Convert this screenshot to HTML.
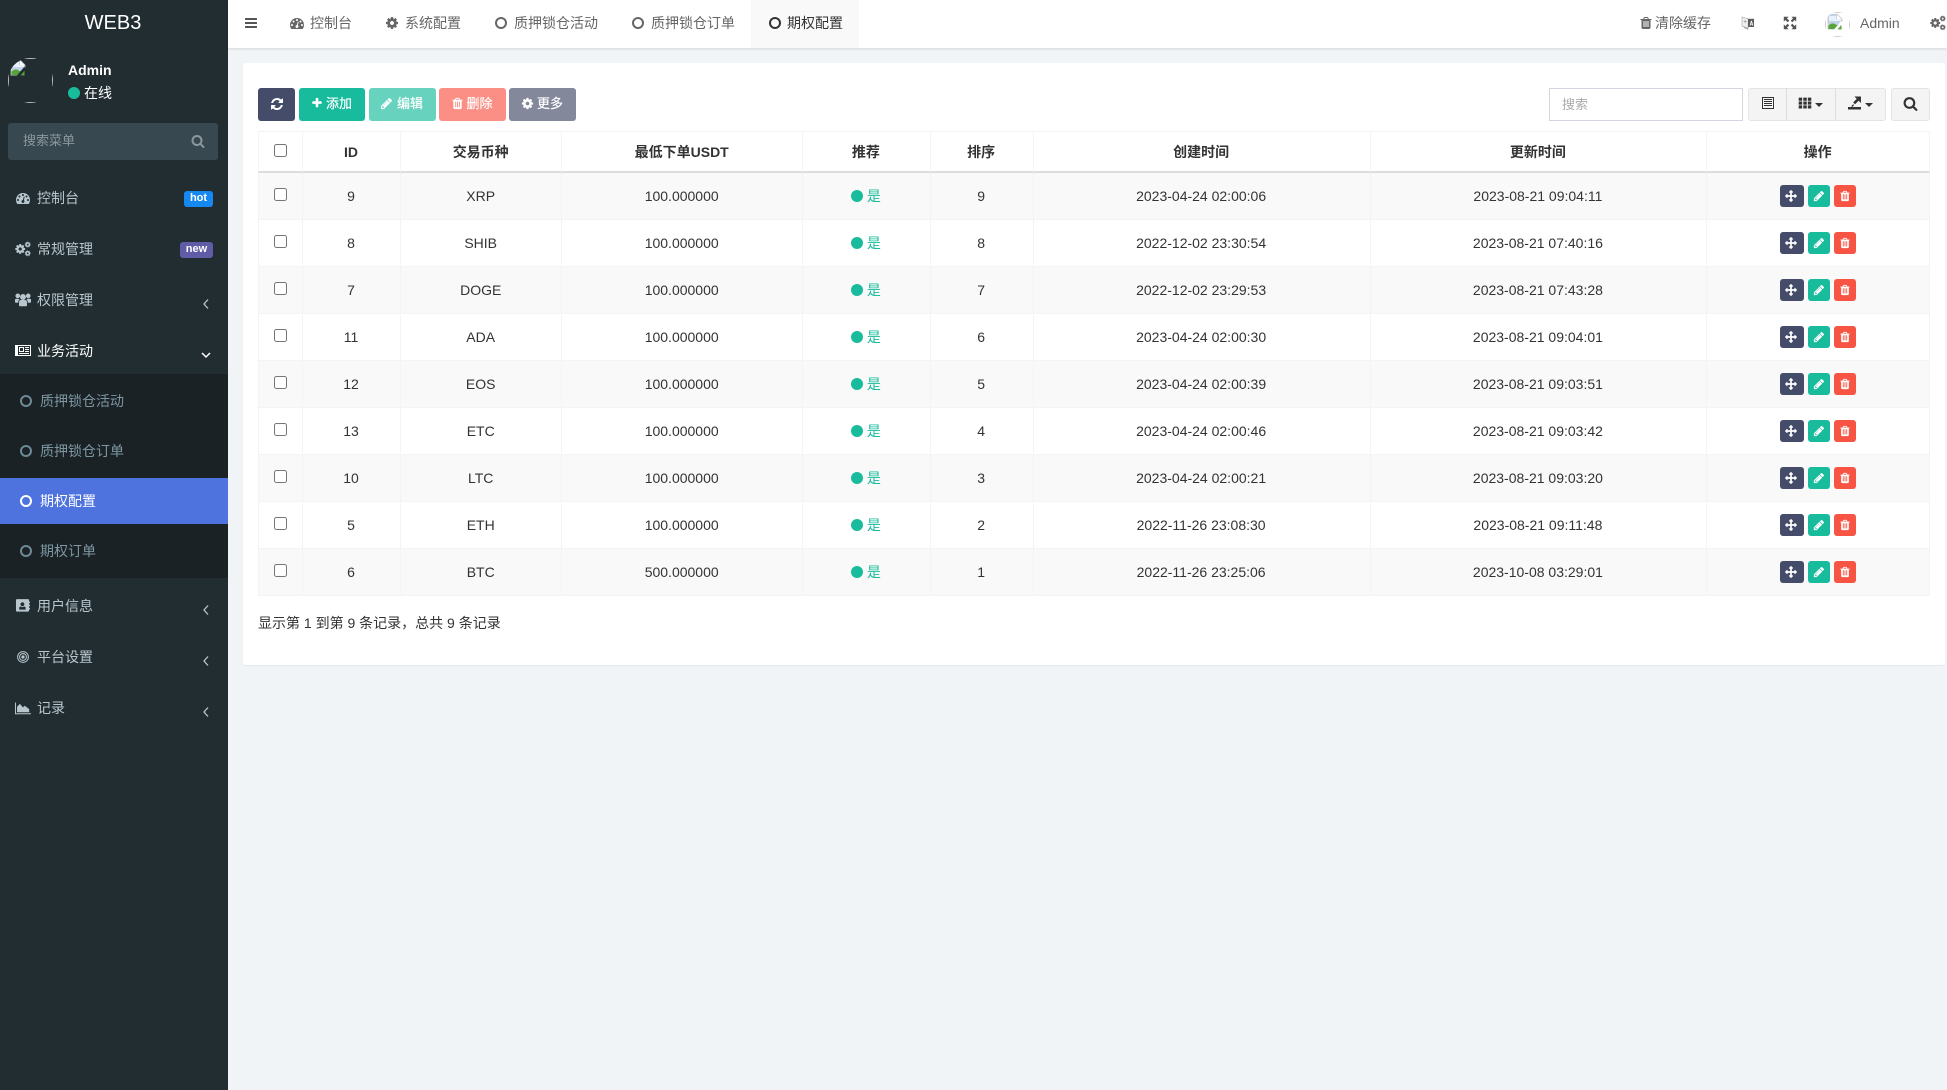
<!DOCTYPE html>
<html lang="zh"><head><meta charset="utf-8"><title>WEB3</title>
<style>
*{box-sizing:border-box}
html,body{margin:0;padding:0;width:1947px;height:1090px;overflow:hidden;background:#f1f4f6;font:14px/20px "Liberation Sans","Noto Sans CJK SC",sans-serif;color:#333}
.a{position:absolute;white-space:nowrap}
svg.i{position:absolute;fill:currentColor;display:block;overflow:visible}
#side{position:absolute;left:0;top:0;width:228px;height:1090px;background:#222d32}
#top{position:absolute;left:228px;top:0;width:1719px;height:48px;background:#fff;box-shadow:0 1px 3px rgba(0,0,0,.12)}
.m{position:absolute;left:37px;color:#b8c7ce;white-space:nowrap;line-height:20px}
.sm{position:absolute;left:40px;color:#7d96a1;white-space:nowrap;line-height:20px}
.ring{position:absolute;border:2.4px solid currentColor;border-radius:50%;width:12px;height:12px}
.tt{position:absolute;top:13px;color:#666;white-space:nowrap;line-height:20px}
#panel{position:absolute;left:243px;top:63px;width:1702px;height:602px;background:#fff;border-radius:3px;box-shadow:0 1px 1px rgba(0,0,0,.05)}
.btn{position:absolute;top:88px;height:33px;border-radius:3px;color:#fff;font-size:13px;line-height:31px;white-space:nowrap;-webkit-text-stroke:.2px #fff}
table{position:absolute;left:258px;top:131px;width:1672px;border-collapse:separate;border-spacing:0;table-layout:fixed}
th,td{text-align:center;padding:0 1px 0 0;border-left:1px solid #f4f4f4;vertical-align:middle;position:relative}
th:last-child,td:last-child{border-right:1px solid #f4f4f4}
th{height:42px;border-top:1px solid #f4f4f4;border-bottom:2px solid #ddd;font-weight:700;line-height:20px;padding-top:1px}
td{height:47px;border-bottom:1px solid #f4f4f4;line-height:20px}
tr.o td{background:#f9f9f9}
.cb{position:absolute;left:15px;top:15px;width:13px;height:13px;margin:0}
th .cb{top:12px}
.dot{display:inline-block;width:12px;height:12px;border-radius:50%;background:#18bc9c;vertical-align:-1px;margin-right:4px}
.y{color:#18bc9c}
.ab{position:absolute;top:12px;width:22px;height:22px;border-radius:3px;color:#fff}
.ab svg{left:5px;top:5px;width:12px;height:12px}
</style></head>
<body>
<svg width="0" height="0" style="position:absolute">
<defs>
<symbol id="bars" viewBox="0 0 1792 1792"><path d="M1664 1344v128q0 26-19 45t-45 19h-1408q-26 0-45-19t-19-45v-128q0-26 19-45t45-19h1408q26 0 45 19t19 45zm0-512v128q0 26-19 45t-45 19h-1408q-26 0-45-19t-19-45v-128q0-26 19-45t45-19h1408q26 0 45 19t19 45zm0-512v128q0 26-19 45t-45 19h-1408q-26 0-45-19t-19-45v-128q0-26 19-45t45-19h1408q26 0 45 19t19 45z"/></symbol>
<symbol id="search" viewBox="0 0 1792 1792"><path d="M1216 832q0-185-131.500-316.500t-316.500-131.500-316.500 131.500-131.500 316.500 131.500 316.500 316.500 131.500 316.500-131.500 131.500-316.500zm512 832q0 52-38 90t-90 38q-54 0-90-38l-343-342q-179 124-399 124-143 0-273.500-55.500t-225-150-150-225-55.500-273.500 55.500-273.500 150-225 225-150 273.500-55.500 273.500 55.500 225 150 150 225 55.500 273.500q0 220-124 399l343 343q37 37 37 90z"/></symbol>
<symbol id="plus" viewBox="0 0 1792 1792"><path d="M1600 736v192q0 40-28 68t-68 28h-416v416q0 40-28 68t-68 28h-192q-40 0-68-28t-28-68v-416h-416q-40 0-68-28t-28-68v-192q0-40 28-68t68-28h416v-416q0-40 28-68t68-28h192q40 0 68 28t28 68v416h416q40 0 68 28t28 68z"/></symbol>
<symbol id="pencil" viewBox="0 0 1792 1792"><path d="M491 1536l91-91-235-235-91 91v107h128v128h107zm523-928q0-22-22-22-10 0-17 7l-542 542q-7 7-7 17 0 22 22 22 10 0 17-7l542-542q7-7 7-17zm-54-192l416 416-832 832h-416v-416zm683 96q0 53-37 90l-166 166-416-416 166-165q36-38 90-38 53 0 91 38l235 234q37 39 37 91z"/></symbol>
<symbol id="trash" viewBox="0 0 1792 1792"><path d="M704 1376v-704q0-14-9-23t-23-9h-64q-14 0-23 9t-9 23v704q0 14 9 23t23 9h64q14 0 23-9t9-23zm256 0v-704q0-14-9-23t-23-9h-64q-14 0-23 9t-9 23v704q0 14 9 23t23 9h64q14 0 23-9t9-23zm256 0v-704q0-14-9-23t-23-9h-64q-14 0-23 9t-9 23v704q0 14 9 23t23 9h64q14 0 23-9t9-23zm-544-992h448l-48-117q-7-9-17-11h-317q-10 2-17 11zm928 32v64q0 14-9 23t-23 9h-96v948q0 83-47 143.500t-113 60.500h-832q-66 0-113-58.500t-47-141.500v-952h-96q-14 0-23-9t-9-23v-64q0-14 9-23t23-9h309l70-167q15-37 54-63t79-26h320q40 0 79 26t54 63l70 167h309q14 0 23 9t9 23z"/></symbol>
<symbol id="cog" viewBox="0 0 1792 1792"><path d="M1152 896q0-106-75-181t-181-75-181 75-75 181 75 181 181 75 181-75 75-181zm512-109v222q0 12-8 23t-20 13l-185 28q-19 54-39 91 35 50 107 138 10 12 10 25t-9 23q-27 37-99 108t-94 71q-12 0-26-9l-138-108q-44 23-91 38-16 136-29 186-7 28-36 28h-222q-14 0-24.500-8.500t-11.500-21.500l-28-184q-49-16-90-37l-141 107q-10 9-25 9-14 0-25-11-126-114-165-168-7-10-7-23 0-12 8-23 15-21 51-66.500t54-70.500q-27-50-41-99l-183-27q-13-2-21-12.500t-8-23.500v-222q0-12 8-23t19-13l186-28q14-46 39-92-40-57-107-138-10-12-10-24 0-10 9-23 26-36 98.500-107.500t94.500-71.500q13 0 26 10l138 107q44-23 91-38 16-136 29-186 7-28 36-28h222q14 0 24.500 8.500t11.500 21.500l28 184q49 16 90 37l142-107q9-9 24-9 13 0 25 10 129 119 165 170 7 8 7 22 0 12-8 23-15 21-51 66.500t-54 70.500q26 50 41 98l183 28q13 2 21 12.500t8 23.500z"/></symbol>
<symbol id="cogs" viewBox="0 0 1792 1792"><path transform="translate(-60 250) scale(.72)" d="M1152 896q0-106-75-181t-181-75-181 75-75 181 75 181 181 75 181-75 75-181zm512-109v222q0 12-8 23t-20 13l-185 28q-19 54-39 91 35 50 107 138 10 12 10 25t-9 23q-27 37-99 108t-94 71q-12 0-26-9l-138-108q-44 23-91 38-16 136-29 186-7 28-36 28h-222q-14 0-24.500-8.500t-11.500-21.500l-28-184q-49-16-90-37l-141 107q-10 9-25 9-14 0-25-11-126-114-165-168-7-10-7-23 0-12 8-23 15-21 51-66.500t54-70.500q-27-50-41-99l-183-27q-13-2-21-12.500t-8-23.500v-222q0-12 8-23t19-13l186-28q14-46 39-92-40-57-107-138-10-12-10-24 0-10 9-23 26-36 98.500-107.500t94.500-71.500q13 0 26 10l138 107q44-23 91-38 16-136 29-186 7-28 36-28h222q14 0 24.500 8.500t11.500 21.500l28 184q49 16 90 37l142-107q9-9 24-9 13 0 25 10 129 119 165 170 7 8 7 22 0 12-8 23-15 21-51 66.500t-54 70.500q26 50 41 98l183 28q13 2 21 12.500t8 23.500z"/><g fill="none" stroke="currentColor"><circle cx="1420" cy="400" r="190" stroke-width="170"/><circle cx="1420" cy="1380" r="190" stroke-width="170"/><circle cx="1420" cy="400" r="300" stroke-width="60" stroke-dasharray="90 100"/><circle cx="1420" cy="1380" r="300" stroke-width="60" stroke-dasharray="90 100"/></g></symbol>
<symbol id="arrows" viewBox="0 0 1792 1792"><path d="M1792 896q0 26-19 45l-256 256q-19 19-45 19t-45-19-19-45v-128h-384v384h128q26 0 45 19t19 45-19 45l-256 256q-19 19-45 19t-45-19l-256-256q-19-19-19-45t19-45 45-19h128v-384h-384v128q0 26-19 45t-45 19-45-19l-256-256q-19-19-19-45t19-45l256-256q19-19 45-19t45 19 19 45v128h384v-384h-128q-26 0-45-19t-19-45 19-45l256-256q19-19 45-19t45 19l256 256q19 19 19 45t-19 45-45 19h-128v384h384v-128q0-26 19-45t45-19 45 19l256 256q19 19 19 45z"/></symbol>
<symbol id="refresh" viewBox="0 0 1792 1792"><path d="M1639 1056q0 5-1 7-64 268-268 434.500t-478 166.500q-146 0-282.500-55t-243.500-157l-129 129q-19 19-45 19t-45-19-19-45v-448q0-26 19-45t45-19h448q26 0 45 19t19 45-19 45l-137 137q71 66 161 102t187 36q134 0 250-65t186-179q11-17 53-117 8-23 30-23h192q13 0 22.500 9.500t9.500 22.500zm25-800v448q0 26-19 45t-45 19h-448q-26 0-45-19t-19-45 19-45l138-138q-148-137-349-137-134 0-250 65t-186 179q-11 17-53 117-8 23-30 23h-199q-13 0-22.500-9.500t-9.500-22.500v-7q65-268 270-434.500t480-166.500q146 0 284 55.500t245 156.500l130-129q19-19 45-19t45 19 19 45z"/></symbol>
<symbol id="dash" viewBox="0 0 1792 1792"><path d="M384 1152q0-53-37.500-90.500t-90.500-37.500-90.500 37.500-37.500 90.500 37.500 90.500 90.500 37.500 90.500-37.500 37.500-90.500zm192-448q0-53-37.500-90.500t-90.500-37.500-90.500 37.500-37.500 90.500 37.500 90.500 90.500 37.500 90.500-37.500 37.500-90.500zm428 481l101-382q6-26-7.500-48.500t-38.500-29.500-48 6.500-30 39.500l-101 382q-60 5-107 43.500t-63 98.500q-20 77 20 146t117 89 146-20 89-117q16-60-6-117t-72-91zm660-33q0-53-37.500-90.500t-90.500-37.500-90.500 37.500-37.500 90.500 37.500 90.500 90.500 37.500 90.500-37.500 37.500-90.500zm-640-640q0-53-37.500-90.500t-90.500-37.500-90.500 37.500-37.500 90.500 37.500 90.500 90.500 37.500 90.500-37.500 37.500-90.500zm448 192q0-53-37.500-90.500t-90.500-37.500-90.500 37.500-37.500 90.500 37.500 90.500 90.500 37.500 90.500-37.500 37.500-90.500zm320 448q0 261-141 483-19 29-54 29h-1402q-35 0-54-29-141-221-141-483 0-182 71-348t191-286 286-191 348-71 348 71 286 191 191 286 71 348z"/></symbol>
<symbol id="users" viewBox="0 0 1792 1792"><circle cx="896" cy="560" r="330"/><circle cx="310" cy="430" r="260"/><circle cx="1482" cy="430" r="260"/><path d="M450 1530V1130q0-200 190-230h512q190 30 190 230v400q0 70-90 70H540q-90 0-90-70zM0 1100V860q0-90 130-100h250q50 70 130 110-150 60-150 280v60H120q-120 0-120-110zM1792 1100V860q0-90-130-100h-250q-50 70-130 110 150 60 150 280v60h240q120 0 120-110z"/></symbol>
<symbol id="addr" viewBox="0 0 1792 1792"><path fill-rule="evenodd" d="M220 130h1240q110 0 110 110v150h110v180h-110v170h110v180h-110v170h110v180h-110v150q0 110-110 110H220q-110 0-110-110V240q0-110 110-110zM830 480a220 220 0 1 0 .1 0zM470 1300h720v-160q0-170-170-190l-190 90-190-90q-170 20-170 190z"/></symbol>
<symbol id="bull" viewBox="0 0 1792 1792"><g fill="none" stroke="currentColor" stroke-width="130"><circle cx="896" cy="896" r="690"/><circle cx="896" cy="896" r="440"/></g><circle cx="896" cy="896" r="210"/></symbol>
<symbol id="area" viewBox="0 0 1792 1792"><path d="M0 300h110v1180h1682v110H0z"/><path d="M230 1370V760l320-330 340 400 200-180 500 370v350z"/></symbol>
<symbol id="expand" viewBox="0 0 1792 1792"><path d="M100 100h620L510 310l290 290-200 200-290-290-210 210zM1692 100v620l-210-210-290 290-200-200 290-290-210-210zM100 1692v-620l210 210 290-290 200 200-290 290 210 210zM1692 1692h-620l210-210-290-290 200-200 290 290 210-210z"/></symbol>
<symbol id="list" viewBox="0 0 1792 1792"><path fill-rule="evenodd" d="M128 128h1536v1536H128zM256 256v1280h1280V256zM384 384h1024v128H384zM384 640h1024v128H384zM384 896h1024v128H384zM384 1152h1024v128H384z"/></symbol>
<symbol id="th" viewBox="0 0 1792 1792"><path d="M90 200h440v400H90zM680 200h440v400H680zM1260 200h440v400h-440zM90 700h440v400H90zM680 700h440v400H680zM1260 700h440v400h-440zM90 1200h440v400H90zM680 1200h440v400H680zM1260 1200h440v400h-440z"/></symbol>
<symbol id="exp" viewBox="0 0 1792 1792"><path d="M0 1408h1664v320H0zM820 60h840v840l-300-300-460 460-240-240 460-460zM420 1290l240-240 120 120-240 240z"/></symbol>
<symbol id="lang" viewBox="0 0 1792 1792"><path fill="#f1f1f1" stroke="#999" stroke-width="70" d="M130 130l780 230v1180L130 1300z"/><path fill="#999" d="M330 640h380v90H330zM480 520h90v400h-90z"/><path fill="#5a5a5a" d="M900 360h760v1050H900z"/><path fill="#fff" d="M1110 1220l170-620h110l170 620h-120l-30-130h-150l-30 130zM1280 1000h100l-50-220z"/><path fill="none" stroke="#888" stroke-width="90" d="M380 1470l480 220v-180"/></symbol>
<symbol id="broken" viewBox="0 0 16 16"><path d="M1 0h9l5 5v3l-7 7.500H1z" fill="#c3d4ea"/><path d="M10 0l5 5h-5z" fill="#fff"/><path d="M2 2h7v3h5v2H2z" fill="#e9f1fb"/><path d="M1.500 15V11.500c3-2.800 5.500-2.800 8-.5l5-1v5.500z" fill="#57a43a"/><path d="M15 6 7 15.500h3.500L16 9z" style="fill:var(--g,#222d32)"/><path d="M1 0h9l5 5v2.500M1 0v15.500" fill="none" stroke="#c4c4c4" stroke-width=".8"/></symbol>
</defs></svg>

<div id="side">
<div class="a" style="left:0;top:13px;width:226px;text-align:center;font-size:20px;color:#fff;line-height:20px">WEB3</div>

<div class="a" style="left:8px;top:58px;width:45px;height:45px;border-radius:50%;overflow:hidden">
 <div style="position:absolute;inset:0;border:1px solid #bbb"></div>
 <svg class="i" style="left:2px;top:2px;width:16px;height:16px"><use href="#broken"/></svg>
</div>
<div class="a" style="left:68px;top:60px;color:#fff;font-weight:700">Admin</div>
<div class="a" style="left:68px;top:87px;width:12px;height:12px;border-radius:50%;background:#18bc9c"></div>
<div class="a" style="left:84px;top:83px;color:#fff">在线</div>

<div class="a" style="left:8px;top:123px;width:210px;height:37px;background:#374850;border-radius:3px"></div>
<div class="a" style="left:23px;top:131px;color:#8b979c;font-size:13px">搜索菜单</div>
<svg class="i" style="left:191px;top:134px;width:14px;height:14px;color:#8b979c"><use href="#search"/></svg>

<svg class="i" style="left:16px;top:191px;width:14px;height:14px;color:#b8c7ce"><use href="#dash"/></svg>
<div class="m" style="top:188px">控制台</div>
<div class="a" style="left:184px;top:191px;width:29px;height:16px;background:#1688f1;border-radius:3px;color:#fff;font-size:11px;font-weight:700;line-height:14px;text-align:center">hot</div>

<svg class="i" style="left:15px;top:241px;width:16px;height:16px;color:#b8c7ce"><use href="#cogs"/></svg>
<div class="m" style="top:239px">常规管理</div>
<div class="a" style="left:180px;top:242px;width:33px;height:16px;background:#605ca8;border-radius:3px;color:#fff;font-size:11px;font-weight:700;line-height:14px;text-align:center">new</div>

<svg class="i" style="left:15px;top:292px;width:16px;height:16px;color:#b8c7ce"><use href="#users"/></svg>
<div class="m" style="top:290px">权限管理</div>
<svg class="i" style="left:203px;top:298px;width:6px;height:12px" viewBox="0 0 6 12"><path d="M5 1.500 1 6 5 10.500" fill="none" stroke="#b8c7ce" stroke-width="1.300"/></svg>

<svg class="i" style="left:15px;top:345px;width:16px;height:11px;color:#fff" viewBox="0 0 16 11"><path fill-rule="evenodd" d="M0 0h16v11H0zM3 1v9h12V1zM4 2h5v5H4zM5 3v3h3V3zM10 2h4v1h-4zM10 4h4v1h-4zM10 6h4v1h-4zM4 8h10v1H4z"/></svg>
<div class="m" style="top:341px;color:#fff">业务活动</div>
<svg class="i" style="left:201px;top:351px;width:10px;height:8px" viewBox="0 0 10 8"><path d="M1 2 5 6 9 2" fill="none" stroke="#fff" stroke-width="1.500"/></svg>

<div class="a" style="left:0;top:374px;width:228px;height:204px;background:#1a2226"></div>
<div class="ring" style="left:20px;top:395px;color:#6d8a96"></div>
<div class="sm" style="top:391px">质押锁仓活动</div>
<div class="ring" style="left:20px;top:445px;color:#6d8a96"></div>
<div class="sm" style="top:441px">质押锁仓订单</div>
<div class="a" style="left:0;top:478px;width:228px;height:46px;background:#4e73df"></div>
<div class="ring" style="left:20px;top:495px;color:#fff"></div>
<div class="sm" style="top:491px;color:#fff">期权配置</div>
<div class="ring" style="left:20px;top:545px;color:#6d8a96"></div>
<div class="sm" style="top:541px">期权订单</div>

<svg class="i" style="left:15px;top:598px;width:16px;height:16px;color:#b8c7ce"><use href="#addr"/></svg>
<div class="m" style="top:596px">用户信息</div>
<svg class="i" style="left:203px;top:604px;width:6px;height:12px" viewBox="0 0 6 12"><path d="M5 1.500 1 6 5 10.500" fill="none" stroke="#b8c7ce" stroke-width="1.300"/></svg>

<svg class="i" style="left:16px;top:650px;width:14px;height:14px;color:#b8c7ce"><use href="#bull"/></svg>
<div class="m" style="top:647px">平台设置</div>
<svg class="i" style="left:203px;top:655px;width:6px;height:12px" viewBox="0 0 6 12"><path d="M5 1.500 1 6 5 10.500" fill="none" stroke="#b8c7ce" stroke-width="1.300"/></svg>

<svg class="i" style="left:15px;top:700px;width:16px;height:16px;color:#b8c7ce"><use href="#area"/></svg>
<div class="m" style="top:698px">记录</div>
<svg class="i" style="left:203px;top:706px;width:6px;height:12px" viewBox="0 0 6 12"><path d="M5 1.500 1 6 5 10.500" fill="none" stroke="#b8c7ce" stroke-width="1.300"/></svg>
</div>

<div id="top"></div>
<svg class="i" style="left:244px;top:16px;width:14px;height:14px;color:#555"><use href="#bars"/></svg>

<svg class="i" style="left:290px;top:16px;width:14px;height:14px;color:#666"><use href="#dash"/></svg>
<div class="tt" style="left:310px">控制台</div>
<svg class="i" style="left:385px;top:16px;width:14px;height:14px;color:#666"><use href="#cog"/></svg>
<div class="tt" style="left:405px">系统配置</div>
<div class="ring" style="left:495px;top:17px;color:#666;border-width:2px"></div>
<div class="tt" style="left:514px">质押锁仓活动</div>
<div class="ring" style="left:632px;top:17px;color:#666;border-width:2px"></div>
<div class="tt" style="left:651px">质押锁仓订单</div>
<div class="a" style="left:751px;top:0;width:108px;height:48px;background:#f9f9f9"></div>
<div class="ring" style="left:769px;top:17px;color:#333;border-width:2px"></div>
<div class="tt" style="left:787px;color:#333">期权配置</div>

<svg class="i" style="left:1639px;top:16px;width:14px;height:14px;color:#666"><use href="#trash"/></svg>
<div class="tt" style="left:1655px">清除缓存</div>
<svg class="i" style="left:1741px;top:16px;width:14px;height:14px;color:#666"><use href="#lang"/></svg>
<svg class="i" style="left:1783px;top:16px;width:14px;height:14px;color:#555"><use href="#expand"/></svg>
<div class="a" style="left:1825px;top:12px;width:25px;height:25px;border-radius:50%;overflow:hidden;--g:#fff">
 <div style="position:absolute;inset:0;border:1px solid #ccc"></div>
 <svg class="i" style="left:2px;top:2px;width:16px;height:16px"><use href="#broken"/></svg>
</div>
<div class="tt" style="left:1860px">Admin</div>
<svg class="i" style="left:1930px;top:15px;width:16px;height:16px;color:#666"><use href="#cogs"/></svg>

<div id="panel"></div>

<div class="btn" style="left:258px;width:37px;background:#444c69"><svg class="i" style="left:12px;top:8.500px;width:14px;height:14px"><use href="#refresh"/></svg></div>
<div class="btn" style="left:299px;width:66px;background:#18bc9c"><svg class="i" style="left:12px;top:9px;width:12px;height:12px"><use href="#plus"/></svg><span style="position:absolute;left:27px">添加</span></div>
<div class="btn" style="left:369px;width:67px;background:#67d3bf"><svg class="i" style="left:11px;top:9px;width:13px;height:13px"><use href="#pencil"/></svg><span style="position:absolute;left:28px">编辑</span></div>
<div class="btn" style="left:439px;width:67px;background:#fb8f85"><svg class="i" style="left:12px;top:9px;width:13px;height:13px"><use href="#trash"/></svg><span style="position:absolute;left:27.500px">删除</span></div>
<div class="btn" style="left:509px;width:67px;background:#83889b"><svg class="i" style="left:12px;top:9px;width:13px;height:13px"><use href="#cog"/></svg><span style="position:absolute;left:28px">更多</span></div>

<div class="a" style="left:1549px;top:88px;width:194px;height:33px;border:1px solid #d2d6de;background:#fff;color:#aaa;font-size:13px;line-height:31px;padding-left:12px">搜索</div>
<div class="a" style="left:1748px;top:88px;width:138px;height:33px;background:#f4f4f4;border:1px solid #e4e4e4;border-radius:3px"></div>
<div class="a" style="left:1786px;top:88px;width:1px;height:33px;background:#ddd"></div>
<div class="a" style="left:1835px;top:88px;width:1px;height:33px;background:#ddd"></div>
<svg class="i" style="left:1761px;top:96px;width:14px;height:14px;color:#333"><use href="#list"/></svg>
<svg class="i" style="left:1798px;top:96px;width:14px;height:14px;color:#333"><use href="#th"/></svg>
<div class="a" style="left:1815px;top:103px;border:4px solid transparent;border-top-color:#333;border-bottom:0"></div>
<svg class="i" style="left:1848px;top:96px;width:14px;height:14px;color:#333"><use href="#exp"/></svg>
<div class="a" style="left:1865px;top:103px;border:4px solid transparent;border-top-color:#333;border-bottom:0"></div>
<div class="a" style="left:1891px;top:88px;width:39px;height:33px;background:#f4f4f4;border:1px solid #e4e4e4;border-radius:3px"></div>
<svg class="i" style="left:1903px;top:96px;width:15px;height:15px;color:#333"><use href="#search"/></svg>

<table>
<colgroup><col style="width:44px"><col style="width:98px"><col style="width:161.400px"><col style="width:240.600px"><col style="width:127.700px"><col style="width:103px"><col style="width:336.900px"><col style="width:336.700px"><col></colgroup>
<thead><tr><th><input class="cb" type="checkbox"></th><th>ID</th><th>交易币种</th><th>最低下单USDT</th><th>推荐</th><th>排序</th><th>创建时间</th><th>更新时间</th><th>操作</th></tr></thead>
<tbody>
<tr class="o"><td><input class="cb" type="checkbox"></td><td>9</td><td>XRP</td><td>100.000000</td><td class="y"><i class="dot"></i>是</td><td>9</td><td>2023-04-24 02:00:06</td><td>2023-08-21 09:04:11</td><td><div class="ab" style="left:73px;width:24px;background:#444c69"><svg class="i"><use href="#arrows"/></svg></div><div class="ab" style="left:101px;background:#18bc9c"><svg class="i"><use href="#pencil"/></svg></div><div class="ab" style="left:127px;background:#f75444"><svg class="i"><use href="#trash"/></svg></div></td></tr>
<tr><td><input class="cb" type="checkbox"></td><td>8</td><td>SHIB</td><td>100.000000</td><td class="y"><i class="dot"></i>是</td><td>8</td><td>2022-12-02 23:30:54</td><td>2023-08-21 07:40:16</td><td><div class="ab" style="left:73px;width:24px;background:#444c69"><svg class="i"><use href="#arrows"/></svg></div><div class="ab" style="left:101px;background:#18bc9c"><svg class="i"><use href="#pencil"/></svg></div><div class="ab" style="left:127px;background:#f75444"><svg class="i"><use href="#trash"/></svg></div></td></tr>
<tr class="o"><td><input class="cb" type="checkbox"></td><td>7</td><td>DOGE</td><td>100.000000</td><td class="y"><i class="dot"></i>是</td><td>7</td><td>2022-12-02 23:29:53</td><td>2023-08-21 07:43:28</td><td><div class="ab" style="left:73px;width:24px;background:#444c69"><svg class="i"><use href="#arrows"/></svg></div><div class="ab" style="left:101px;background:#18bc9c"><svg class="i"><use href="#pencil"/></svg></div><div class="ab" style="left:127px;background:#f75444"><svg class="i"><use href="#trash"/></svg></div></td></tr>
<tr><td><input class="cb" type="checkbox"></td><td>11</td><td>ADA</td><td>100.000000</td><td class="y"><i class="dot"></i>是</td><td>6</td><td>2023-04-24 02:00:30</td><td>2023-08-21 09:04:01</td><td><div class="ab" style="left:73px;width:24px;background:#444c69"><svg class="i"><use href="#arrows"/></svg></div><div class="ab" style="left:101px;background:#18bc9c"><svg class="i"><use href="#pencil"/></svg></div><div class="ab" style="left:127px;background:#f75444"><svg class="i"><use href="#trash"/></svg></div></td></tr>
<tr class="o"><td><input class="cb" type="checkbox"></td><td>12</td><td>EOS</td><td>100.000000</td><td class="y"><i class="dot"></i>是</td><td>5</td><td>2023-04-24 02:00:39</td><td>2023-08-21 09:03:51</td><td><div class="ab" style="left:73px;width:24px;background:#444c69"><svg class="i"><use href="#arrows"/></svg></div><div class="ab" style="left:101px;background:#18bc9c"><svg class="i"><use href="#pencil"/></svg></div><div class="ab" style="left:127px;background:#f75444"><svg class="i"><use href="#trash"/></svg></div></td></tr>
<tr><td><input class="cb" type="checkbox"></td><td>13</td><td>ETC</td><td>100.000000</td><td class="y"><i class="dot"></i>是</td><td>4</td><td>2023-04-24 02:00:46</td><td>2023-08-21 09:03:42</td><td><div class="ab" style="left:73px;width:24px;background:#444c69"><svg class="i"><use href="#arrows"/></svg></div><div class="ab" style="left:101px;background:#18bc9c"><svg class="i"><use href="#pencil"/></svg></div><div class="ab" style="left:127px;background:#f75444"><svg class="i"><use href="#trash"/></svg></div></td></tr>
<tr class="o"><td><input class="cb" type="checkbox"></td><td>10</td><td>LTC</td><td>100.000000</td><td class="y"><i class="dot"></i>是</td><td>3</td><td>2023-04-24 02:00:21</td><td>2023-08-21 09:03:20</td><td><div class="ab" style="left:73px;width:24px;background:#444c69"><svg class="i"><use href="#arrows"/></svg></div><div class="ab" style="left:101px;background:#18bc9c"><svg class="i"><use href="#pencil"/></svg></div><div class="ab" style="left:127px;background:#f75444"><svg class="i"><use href="#trash"/></svg></div></td></tr>
<tr><td><input class="cb" type="checkbox"></td><td>5</td><td>ETH</td><td>100.000000</td><td class="y"><i class="dot"></i>是</td><td>2</td><td>2022-11-26 23:08:30</td><td>2023-08-21 09:11:48</td><td><div class="ab" style="left:73px;width:24px;background:#444c69"><svg class="i"><use href="#arrows"/></svg></div><div class="ab" style="left:101px;background:#18bc9c"><svg class="i"><use href="#pencil"/></svg></div><div class="ab" style="left:127px;background:#f75444"><svg class="i"><use href="#trash"/></svg></div></td></tr>
<tr class="o"><td><input class="cb" type="checkbox"></td><td>6</td><td>BTC</td><td>500.000000</td><td class="y"><i class="dot"></i>是</td><td>1</td><td>2022-11-26 23:25:06</td><td>2023-10-08 03:29:01</td><td><div class="ab" style="left:73px;width:24px;background:#444c69"><svg class="i"><use href="#arrows"/></svg></div><div class="ab" style="left:101px;background:#18bc9c"><svg class="i"><use href="#pencil"/></svg></div><div class="ab" style="left:127px;background:#f75444"><svg class="i"><use href="#trash"/></svg></div></td></tr>
</tbody></table>

<div class="a" style="left:258px;top:613px">显示第 1 到第 9 条记录，总共 9 条记录</div>
</body></html>
